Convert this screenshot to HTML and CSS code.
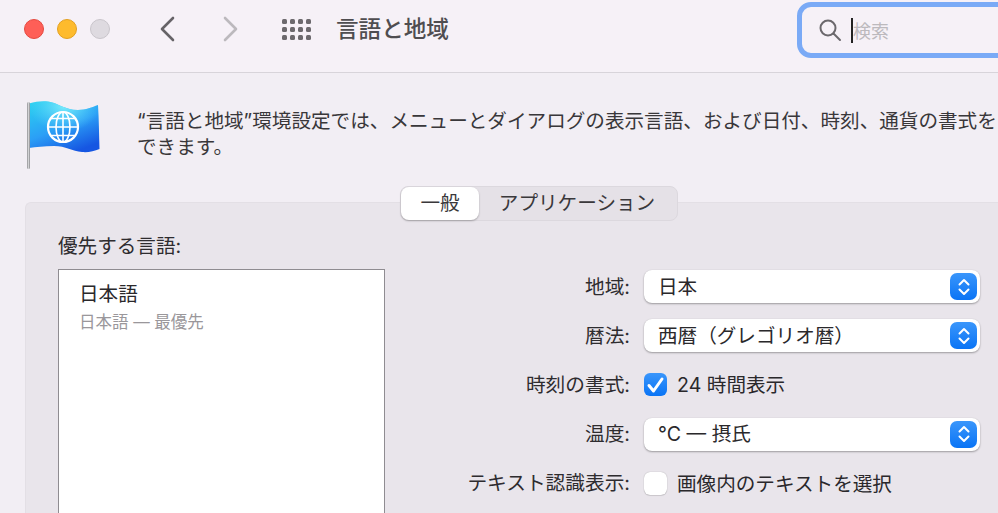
FILE: index.html
```html
<!DOCTYPE html>
<html lang="ja">
<head>
<meta charset="utf-8">
<title>言語と地域</title>
<link rel="stylesheet" href="styles.css">
</head>
<body>
<div class="window">
  <header class="toolbar">
    <div class="lights">
      <span class="light red"></span>
      <span class="light yellow"></span>
      <span class="light gray"></span>
    </div>
    <svg class="chev back" width="16" height="26" viewBox="0 0 16 26"><path d="M14 2 L3 13 L14 24" /></svg>
    <svg class="chev fwd" width="16" height="26" viewBox="0 0 16 26"><path d="M2 2 L13 13 L2 24" /></svg>
    <div class="apps">
      <i></i><i></i><i></i><i></i><i></i><i></i><i></i><i></i><i></i><i></i><i></i><i></i>
    </div>
    <h1 class="title">言語と地域</h1>
    <div class="search">
      <svg class="glass" width="24" height="24" viewBox="0 0 24 24"><circle cx="10" cy="10" r="7.5"/><path d="M15.5 15.5 L22 22"/></svg>
      <span class="caret"></span>
      <span class="placeholder">検索</span>
    </div>
  </header>
  <main class="content">
    <section class="intro">
      <svg class="flag" width="80" height="72" viewBox="0 0 80 72">
        <defs>
          <linearGradient id="fb" x1="0.1" y1="0" x2="0.65" y2="1">
            <stop offset="0" stop-color="#2bd0f0"/>
            <stop offset="0.55" stop-color="#2b9ff6"/>
            <stop offset="1" stop-color="#1656e2"/>
          </linearGradient>
          <radialGradient id="fg" cx="0.5" cy="0.1" r="0.5">
            <stop offset="0" stop-color="#7ceefc" stop-opacity="0.95"/>
            <stop offset="1" stop-color="#5fd8fa" stop-opacity="0"/>
          </radialGradient>
          <linearGradient id="pole" x1="0" y1="0" x2="1" y2="0">
            <stop offset="0" stop-color="#8f8f92"/>
            <stop offset="0.5" stop-color="#d2d2d4"/>
            <stop offset="1" stop-color="#88888b"/>
          </linearGradient>
        </defs>
        <path d="M5 3.5 C12 1.5 18 1 24 1.5 C34 2.5 40 10 54 10 C62 10 68 7 74 5 C75 20 75 35 75.5 49 C70 51.5 64 52.5 58 52 C48 51 42 46 30 46 C20 46 12 47 5 48 Z" fill="url(#fb)"/>
        <path d="M5 3.5 C12 1.5 18 1 24 1.5 C34 2.5 40 10 54 10 C62 10 68 7 74 5 C75 20 75 35 75.5 49 C70 51.5 64 52.5 58 52 C48 51 42 46 30 46 C20 46 12 47 5 48 Z" fill="url(#fg)"/>
        <rect x="3" y="2" width="3" height="67" rx="1.5" fill="url(#pole)"/>
        <g class="globe">
          <circle cx="39" cy="27" r="15"/>
          <ellipse cx="39" cy="27" rx="7" ry="15"/>
          <path d="M39 12 V42 M24 27 H54 M27 18.5 H51 M27 35.5 H51"/>
        </g>
      </svg>
      <p class="intro-text">“言語と地域”環境設定では、メニューとダイアログの表示言語、および日付、時刻、通貨の書式を<br>できます。</p>
    </section>
    <section class="panel">
      <div class="tabs">
        <span class="tab active">一般</span>
        <span class="tab">アプリケーション</span>
      </div>
      <div class="columns">
        <div class="languages">
          <div class="languages-label">優先する言語:</div>
          <div class="list">
            <div class="lang-name">日本語</div>
            <div class="lang-sub">日本語 — 最優先</div>
          </div>
        </div>
        <div class="form">
          <div class="row">
            <span class="label">地域:</span>
            <div class="popup"><span class="value">日本</span><span class="stepper"><svg width="14" height="20" viewBox="0 0 14 20"><path d="M2.5 7.5 L7 3 L11.5 7.5 M2.5 12.5 L7 17 L11.5 12.5"/></svg></span></div>
          </div>
          <div class="row">
            <span class="label">暦法:</span>
            <div class="popup"><span class="value">西暦（グレゴリオ暦）</span><span class="stepper"><svg width="14" height="20" viewBox="0 0 14 20"><path d="M2.5 7.5 L7 3 L11.5 7.5 M2.5 12.5 L7 17 L11.5 12.5"/></svg></span></div>
          </div>
          <div class="row">
            <span class="label">時刻の書式:</span>
            <span class="check on"><svg width="23" height="23" viewBox="0 0 23 23"><path d="M5 12.5 L9.5 18 L18 6"/></svg></span>
            <span class="check-text">24 時間表示</span>
          </div>
          <div class="row">
            <span class="label">温度:</span>
            <div class="popup"><span class="value">°C — 摂氏</span><span class="stepper"><svg width="14" height="20" viewBox="0 0 14 20"><path d="M2.5 7.5 L7 3 L11.5 7.5 M2.5 12.5 L7 17 L11.5 12.5"/></svg></span></div>
          </div>
          <div class="row">
            <span class="label">テキスト認識表示:</span>
            <span class="check"></span>
            <span class="check-text">画像内のテキストを選択</span>
          </div>
        </div>
      </div>
    </section>
  </main>
</div>
</body>
</html>
```
FILE: styles.css
```css
* { box-sizing: border-box; }
html, body { margin: 0; padding: 0; width: 998px; height: 513px; overflow: hidden; }
body {
  font-family: "Inter", "Noto Sans CJK JP", "Liberation Sans", sans-serif;
  color: #2a282b;
  background: #f2eef4;
}
.window { width: 998px; height: 513px; display: flex; flex-direction: column; overflow: hidden; }

.toolbar {
  height: 73px;
  flex: none;
  background: #f6f1f7;
  border-bottom: 1px solid #d8d4da;
  display: flex;
  align-items: flex-start;
  overflow: hidden;
}
.toolbar > * { flex: none; }
.lights { display: flex; gap: 13px; margin: 19px 0 0 24.4px; }
.light { width: 20px; height: 20px; border-radius: 50%; border: 1px solid transparent; }
.red { background: #fe5f57; border-color: #e5493f; }
.yellow { background: #febb2d; border-color: #e3a020; }
.gray { background: #dedae0; border-color: #c9c5cb; }
.chev { margin-top: 16px; fill: none; stroke-width: 2.6px; stroke-linecap: round; stroke-linejoin: round; }
.back { stroke: #666367; margin-left: 49px; }
.fwd { stroke: #bcb9bd; margin-left: 48px; }
.apps {
  margin: 19px 0 0 42.6px;
  width: 29px;
  display: grid;
  grid-template-columns: repeat(4, 5px);
  grid-auto-rows: 5px;
  gap: 3px 3px;
}
.apps i { background: #6c696d; border-radius: 1.5px; }
.title {
  margin: 13px 0 0 25px;
  width: 461px;
  font-size: 22.6px;
  line-height: 32px;
  font-weight: 500;
  color: #4f4d50;
  white-space: nowrap;
}
.search {
  width: 320px;
  height: 56px;
  margin-top: 2px;
  border: 5px solid #7aaaf6;
  border-radius: 14px;
  background: #f6f1f7;
  display: flex;
  align-items: center;
  padding-left: 16px;
}
.glass { fill: none; stroke: #6b686c; stroke-width: 2px; stroke-linecap: round; flex: none; }
.caret { width: 2px; height: 25px; background: #222; margin-left: 9px; flex: none; }
.placeholder { font-size: 18px; color: #bcb9bd; }

.content { flex: 1; display: flex; flex-direction: column; padding-left: 25px; min-height: 0; }
.intro { display: flex; align-items: flex-start; height: 129px; flex: none; }
.flag { margin: 27px 0 0 -1px; flex: none; }
.globe { fill: none; stroke: #fff; stroke-width: 1.6px; }
.globe circle { stroke-width: 2.2px; }
.intro-text {
  margin: 35px 0 0 33px;
  font-size: 19.6px;
  line-height: 26px;
  white-space: nowrap;
  color: #39373a;
}

.panel {
  flex: 1;
  background: #e9e5eb;
  border: 1px solid #e3dfe5;
  border-right: 0;
  border-bottom: 0;
  border-radius: 6px 0 0 0;
  padding-left: 32px;
  min-height: 0;
}
.tabs {
  width: 278px;
  height: 35px;
  margin: -17px 0 0 342px;
  background: #e5e1e7;
  border: 1px solid #dcd8de;
  border-radius: 8px;
  display: flex;
  align-items: stretch;
  font-size: 19.6px;
  color: #3a383b;
}
.tab { display: flex; align-items: center; justify-content: center; flex: 1; line-height: 1; padding-right: 2px; }
.tab.active {
  flex: none;
  width: 78px;
  background: #fff;
  border-radius: 8px;
  box-shadow: 0 1px 2px rgba(0,0,0,.28);
  padding-right: 0;
}
.columns { display: flex; align-items: flex-start; }
.languages { width: 327px; flex: none; padding-top: 12px; }
.languages-label { font-size: 19.6px; line-height: 26px; height: 36px; color: #2e2c2f; white-space: nowrap; }
.list {
  height: 244px;
  background: #fff;
  border: 1px solid #8f8c91;
  border-bottom: 0;
  padding: 11px 0 0 20px;
}
.lang-name { font-size: 19.6px; line-height: 26px; color: #2a282b; }
.lang-sub { font-size: 16.5px; line-height: 26px; color: #9a979b; margin-top: 2px; }

.form { width: 595px; flex: none; padding-top: 41px; }
.row { height: 49.2px; display: flex; align-items: center; }
.label { width: 245px; flex: none; text-align: right; font-size: 19.7px; padding-bottom: 3px; color: #2e2c2f; white-space: nowrap; }
.popup {
  width: 336px;
  height: 33px;
  margin-left: 14px;
  background: #fff;
  border-radius: 8px;
  box-shadow: 0 1px 2px rgba(0,0,0,.32), 0 0 1px rgba(0,0,0,.12);
  display: flex;
  align-items: center;
  justify-content: space-between;
  padding: 0 3px 0 14px;
  font-size: 19.6px;
  color: #2a282b;
}
.value { padding-bottom: 3px; }
.stepper {
  width: 27px;
  height: 27px;
  border-radius: 7px;
  background: linear-gradient(#3a96fb, #0a74f5);
  display: flex;
  align-items: center;
  justify-content: center;
}
.stepper svg { fill: none; stroke: #fff; stroke-width: 2px; stroke-linecap: round; stroke-linejoin: round; }
.check {
  width: 23px;
  height: 23px;
  margin-left: 14px;
  border-radius: 6px;
  background: #fff;
  box-shadow: 0 0 1px rgba(0,0,0,.35), 0 1px 1px rgba(0,0,0,.1);
  flex: none;
  display: flex;
}
.check.on { background: linear-gradient(#3a96fb, #0a74f5); box-shadow: none; }
.check svg { fill: none; stroke: #fff; stroke-width: 3px; stroke-linecap: round; stroke-linejoin: round; }
.check-text { margin-left: 10px; font-size: 19.6px; padding-bottom: 2px; color: #2a282b; white-space: nowrap; }
```
